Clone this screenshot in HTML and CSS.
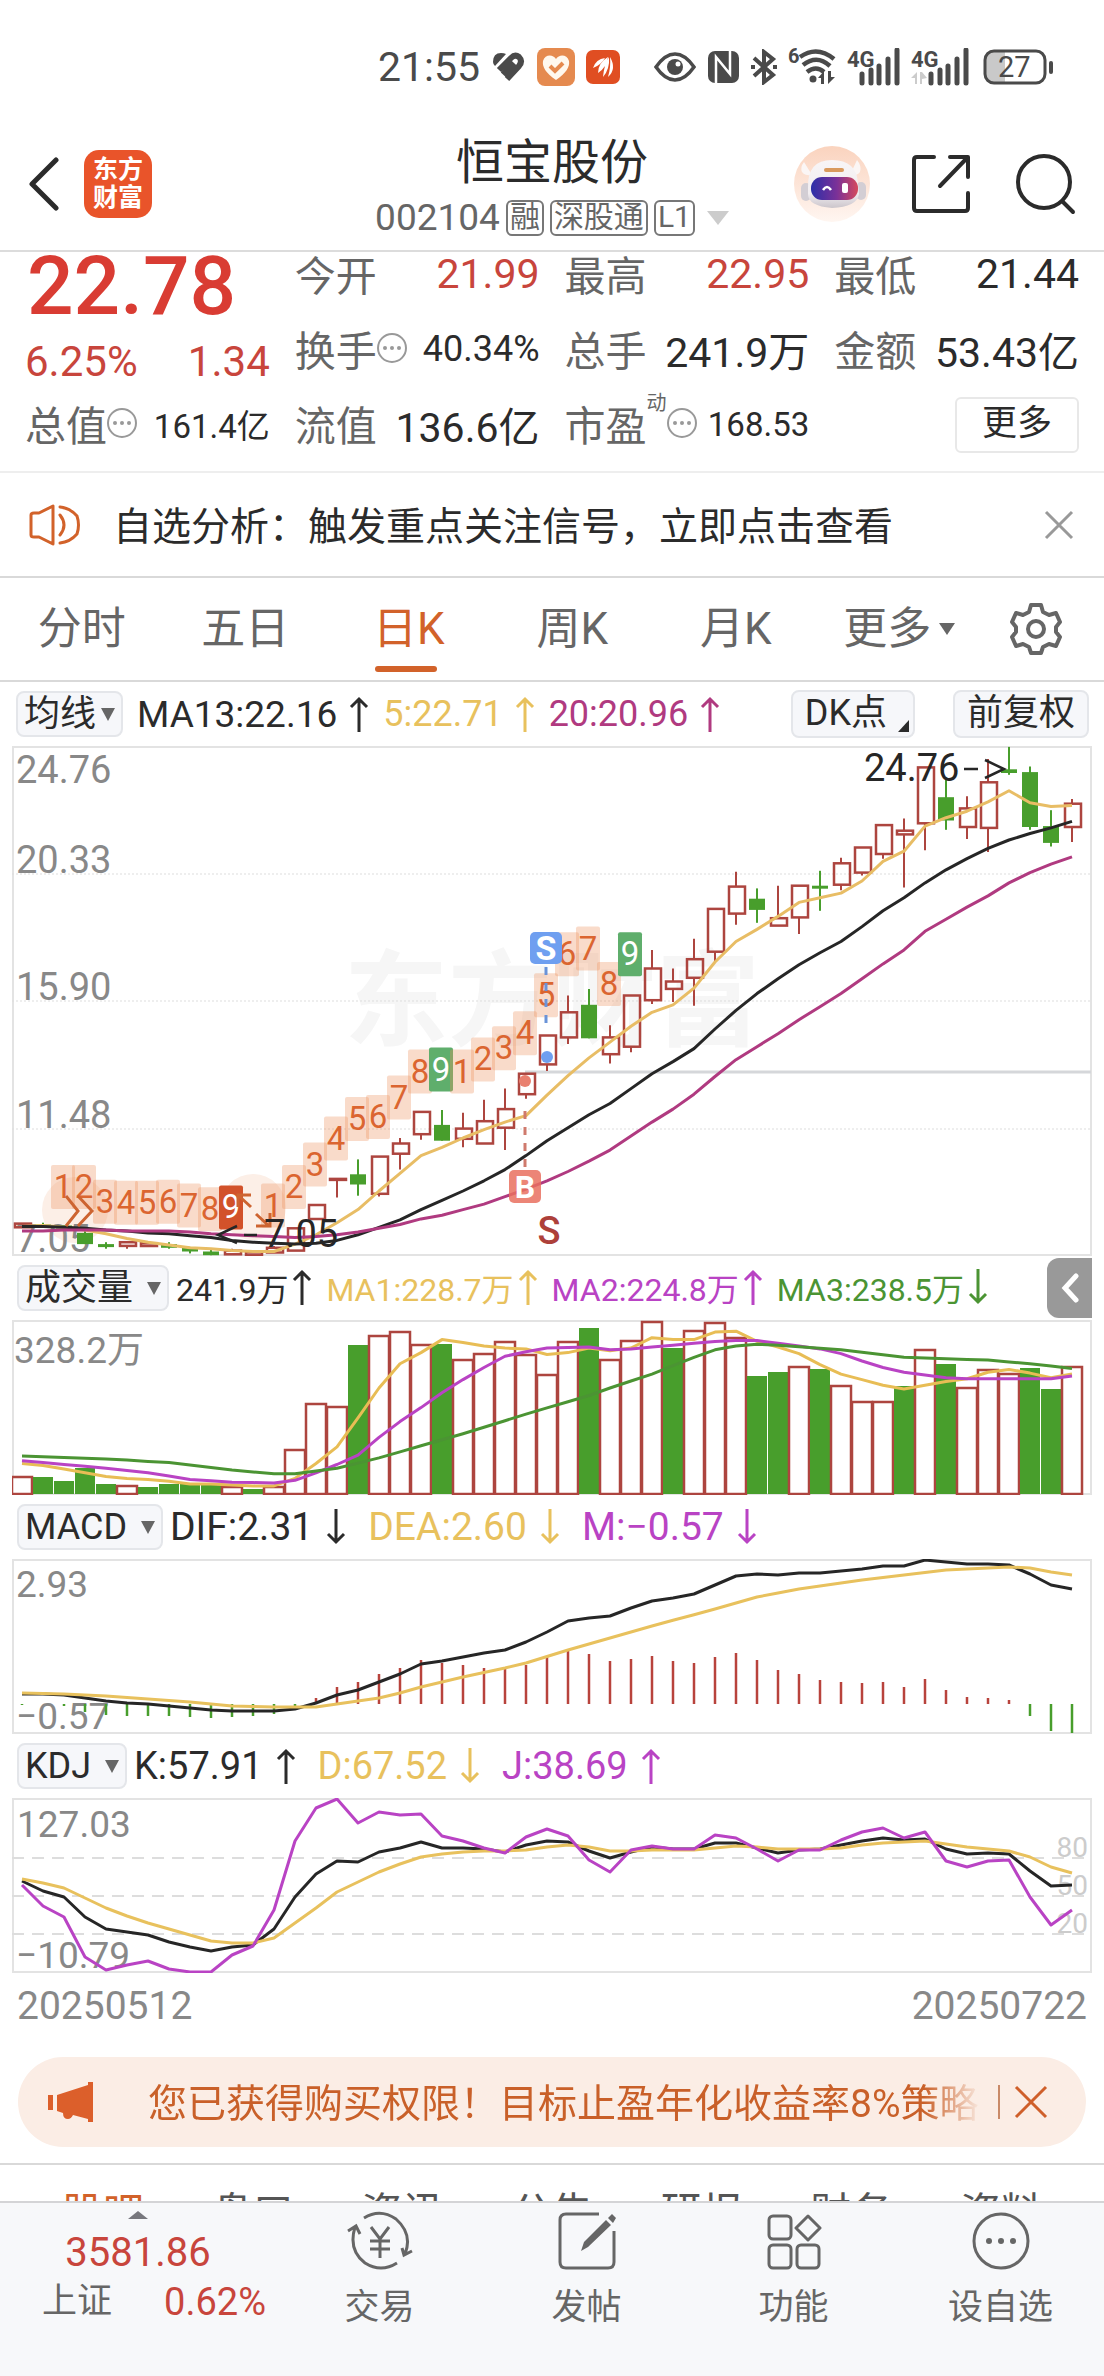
FILE: index.html
```html
<!DOCTYPE html>
<html lang="zh-CN">
<head>
<meta charset="utf-8">
<meta name="viewport" content="width=device-width, initial-scale=1">
<title>恒宝股份 002104</title>
<link rel="stylesheet" href="styles.css">
</head>
<body>
<div class="statusbar">
  <span class="clock">21:55</span>
  <svg width="34" height="30" viewBox="0 0 34 30" fill="none" stroke="#4a4a4a" stroke-width="6"><path d="M1 10Q1 1 9 1q3 0 5 1L3 14Q1 12 1 10z" fill="#4a4a4a" stroke="none"/><path d="M7 18 19 6Q23 2 27 5q4 4 0 9L15 27M11 22.500 22 11"/></svg>
  <svg class="gap-s" width="38" height="38" viewBox="0 0 38 38"><rect width="38" height="38" rx="8" fill="#e58a4f"/><path d="M19 32C9 25 5 19 6 13c2-7 10-7 13-2 3-5 11-5 13 2 1 6-3 12-13 19z" fill="#fff8ee"/><path d="m13 18 5 5 8-8" fill="none" stroke="#e58a4f" stroke-width="4"/></svg>
  <svg class="gap-s" width="34" height="34" viewBox="0 0 34 34"><rect width="34" height="34" rx="7" fill="#e04e22"/><path d="M7 18Q10 9 19 8q-4 7-12 10zM12 23Q12 13 22 7q-1 10-10 16zM17 27Q18 15 23 7q1 12-6 20zM22 27Q25 17 24 7q7 12-2 20z" fill="#fff"/></svg>
  <svg class="gap-l" width="42" height="30" viewBox="0 0 42 30"><path d="M2 15Q11 2 21 2t19 13Q31 28 21 28T2 15z" fill="none" stroke="#4a4a4a" stroke-width="3.500"/><circle cx="21" cy="15" r="8" fill="#4a4a4a"/><circle cx="24" cy="12" r="2.500" fill="#fff"/></svg>
  <svg class="gap-s" width="33" height="34" viewBox="0 0 33 34"><rect x="1" y="1" width="31" height="32" rx="7" fill="#4a4a4a"/><path d="M9 33V7l14 17V1" fill="none" stroke="#fff" stroke-width="2.500"/><path d="M9 7v26" stroke="#fff" stroke-width="2"/></svg>
  <svg class="gap-s" width="26" height="36" viewBox="0 0 26 36" fill="none" stroke="#4a4a4a" stroke-width="4"><path d="M3 9l19 17-9 7V3l9 7L3 27"/><path d="M0 18h4M22 18h4"/></svg>
  <svg class="gap-s" width="48" height="38" viewBox="0 0 48 38"><text x="0" y="15" class="tiny">6</text><g fill="none" stroke="#4a4a4a" stroke-width="4.500"><path d="M12 9Q29-3 46 11M15 17q14-11 27 1M19 24q9-7 17 0"/></g><circle cx="25" cy="31" r="3.500" fill="#4a4a4a"/><path d="M36 23v13h-3v-6h-3zM40 36V23h3v6h4z" fill="#4a4a4a"/></svg>
  <svg class="gap-s" width="53" height="38" viewBox="0 0 53 38"><text x="0" y="19" class="net">4G</text><path d="M15 26v9M24 22v13M32 18v17M41 11v24M50 2v33" stroke="#4a4a4a" stroke-width="5" stroke-linecap="round"/></svg>
  <svg class="gap-s" width="58" height="38" viewBox="0 0 58 38"><text x="0" y="19" class="net">4G</text><path d="M6 24v12H4v-6H0zM9 36V24h2l5 6-5 1v5z" fill="#ccc"/><path d="M20 26v9M29 22v13M37 18v17M46 11v24M55 2v33" stroke="#4a4a4a" stroke-width="5" stroke-linecap="round"/></svg>
  <svg class="gap-m" width="71" height="36" viewBox="0 0 71 36"><rect x="2" y="2" width="60" height="32" rx="9" fill="#fff"/><path d="M22 2v32H11q-9 0-9-9V11q0-9 9-9z" fill="#c9c9c9"/><rect x="2" y="2" width="60" height="32" rx="9" fill="none" stroke="#4a4a4a" stroke-width="3"/><rect x="66" y="12" width="4" height="13" rx="2" fill="#4a4a4a"/><text x="15" y="28" class="batt">27</text></svg>
</div>

<header class="topbar">
  <div class="top-left">
    <button class="icon-btn" aria-label="返回"><svg width="32" height="54" viewBox="0 0 32 54" fill="none" stroke="#2b2b2b" stroke-width="5" stroke-linecap="round" stroke-linejoin="round"><path d="M28 3 4 27l24 24"/></svg></button>
    <a class="logo" href="#">东方<br>财富</a>
  </div>
  <div class="title">
    <h1>恒宝股份</h1>
    <p class="code">002104<span class="tag">融</span><span class="tag">深股通</span><span class="tag">L1</span><i class="tri"></i></p>
  </div>
  <div class="top-right">
    <button class="icon-btn" aria-label="智能助手"><svg width="76" height="76" viewBox="0 0 76 76"><defs><linearGradient id="bg" x2="0" y2="1"><stop stop-color="#fad3be"/><stop offset="1" stop-color="#fff6f1"/></linearGradient><linearGradient id="visor"><stop stop-color="#2c2fa8"/><stop offset=".55" stop-color="#7b3198"/><stop offset="1" stop-color="#d64a5c"/></linearGradient><linearGradient id="shell" x2="0" y2="1"><stop stop-color="#f8f5f6"/><stop offset=".7" stop-color="#f1edf0"/><stop offset="1" stop-color="#cbc5cb"/></linearGradient></defs><circle cx="38" cy="38" r="38" fill="url(#bg)"/><path d="M10 16q-4 5-2 10 3 4 10 3zM63 14q5 6 3 12-3 4-10 3z" fill="#fbf6f5"/><rect x="7" y="37" width="10" height="18" rx="5" fill="#d3ced4"/><rect x="62" y="36" width="10" height="18" rx="5" fill="#d3ced4"/><path d="M14 42Q13 14 38 14t26 24l1 10q-2 13-27 14Q14 60 14 48z" fill="url(#shell)"/><rect x="30" y="22" width="20" height="4" rx="2" fill="#d99a5e"/><rect x="17" y="31" width="47" height="23" rx="11" fill="url(#visor)"/><path d="M29 44q4-6 8 0" fill="none" stroke="#fff" stroke-width="2.500"/><rect x="48" y="37" width="6" height="10" rx="2" fill="#fff"/></svg></button>
    <button class="icon-btn share" aria-label="分享"><svg width="58" height="58" viewBox="0 0 58 58" fill="none" stroke="#2b2b2b" stroke-width="4" stroke-linecap="round" stroke-linejoin="round"><path d="M22 2H5Q2 2 2 5v48q0 3 3 3h48q3 0 3-3V38M38 2h18v20M55 3 28 31"/></svg></button>
    <button class="icon-btn search" aria-label="搜索"><svg width="60" height="62" viewBox="0 0 60 62" fill="none" stroke="#2b2b2b" stroke-width="4" stroke-linecap="round"><circle cx="28" cy="29" r="26"/><path d="m47 49 10 10"/></svg></button>
  </div>
</header>

<section class="quote">
  <div class="price">
    <strong>22.78</strong>
    <p><span>6.25%</span><span>1.34</span></p>
  </div>
  <div class="stat"><span>今开</span><b class="up">21.99</b></div>
  <div class="stat"><span>最高</span><b class="up">22.95</b></div>
  <div class="stat"><span>最低</span><b>21.44</b></div>
  <div class="stat"><span>换手<i class="dots"><i></i><i></i><i></i></i></span><b class="mid">40.34%</b></div>
  <div class="stat"><span>总手</span><b>241.9万</b></div>
  <div class="stat"><span>金额</span><b>53.43亿</b></div>
  <div class="stat"><span>总值<i class="dots"><i></i><i></i><i></i></i></span><b class="small">161.4亿</b></div>
  <div class="stat"><span>流值</span><b>136.6亿</b></div>
  <div class="stat"><span>市盈<sup>动</sup><i class="dots"><i></i><i></i><i></i></i></span><b class="small">168.53</b></div>
  <button class="more">更多</button>
</section>

<div class="notice">
  <svg width="52" height="42" viewBox="0 0 52 42" fill="none" stroke="#d2622a" stroke-width="3" stroke-linecap="round" stroke-linejoin="round"><path d="M2 11q0-2 3-2h5L24 2v38L10 33H5q-3 0-3-2zM31 11q8 10 0 20M31 3q10 1 17 9 3 9 0 18-7 8-17 9"/></svg>
  <a href="#">自选分析：触发重点关注信号，立即点击查看</a>
  <button class="icon-btn" aria-label="关闭"><svg width="30" height="30" viewBox="0 0 30 30" stroke="#999" stroke-width="3"><path d="M2 2l26 26M28 2 2 28"/></svg></button>
</div>

<nav class="periods">
  <button>分时</button><button>五日</button><button class="on">日K</button><button>周K</button><button>月K</button><button>更多<i class="tri"></i></button>
  <button class="gear" aria-label="设置"><svg width="52" height="52" viewBox="0 0 52 52" fill="none" stroke="#666" stroke-width="4" stroke-linejoin="round"><path d="M21 2h10l2 7 6 3 7-2 4 9-4 5v5l4 5-4 9-7-2-6 3-2 6H21l-2-6-6-3-7 2-4-9 4-5v-5l-4-5 4-9 7 2 6-3z"/><circle cx="26" cy="26" r="8"/></svg></button>
</nav>

<svg class="defs" width="0" height="0" aria-hidden="true"><symbol id="up" viewBox="0 0 20 36"><path d="M10 36V3M2 11l8-8 8 8" fill="none" stroke="currentColor" stroke-width="3"/></symbol><symbol id="down" viewBox="0 0 20 36"><path d="M10 0v33M2 25l8 8 8-8" fill="none" stroke="currentColor" stroke-width="3"/></symbol></svg>

<main class="charts">
  <div class="legend price-legend">
    <label class="pick tight"><select aria-label="主图指标"><option>均线</option></select></label>
    <span class="val">MA13:22.16<svg class="arrow"><use href="#up"/></svg></span>
    <span class="val yellow">5:22.71<svg class="arrow"><use href="#up"/></svg></span>
    <span class="val magenta">20:20.96<svg class="arrow"><use href="#up"/></svg></span>
    <button class="chip dk">DK点</button>
    <button class="chip">前复权</button>
  </div>
  <svg class="chart" id="kline" viewBox="0 0 1080 510" role="img" aria-label="日K线"></svg>

  <div class="legend vol-legend">
    <label class="pick"><select aria-label="副图一"><option>成交量</option></select></label>
    <span class="val">241.9万<svg class="arrow"><use href="#up"/></svg></span>
    <span class="val yellow">MA1:228.7万<svg class="arrow"><use href="#up"/></svg></span>
    <span class="val purple">MA2:224.8万<svg class="arrow"><use href="#up"/></svg></span>
    <span class="val green">MA3:238.5万<svg class="arrow"><use href="#down"/></svg></span>
    <button class="drawer" aria-label="展开"><svg width="18" height="30" viewBox="0 0 18 30" fill="none" stroke="#fff" stroke-width="5" stroke-linecap="round"><path d="M15 3 4 15l11 12"/></svg></button>
  </div>
  <svg class="chart" id="volume" viewBox="0 0 1080 175" role="img" aria-label="成交量"></svg>

  <div class="legend macd-legend">
    <label class="pick"><select aria-label="副图二"><option>MACD</option></select></label>
    <span class="val">DIF:2.31<svg class="arrow"><use href="#down"/></svg></span>
    <span class="val yellow">DEA:2.60<svg class="arrow"><use href="#down"/></svg></span>
    <span class="val purple">M:−0.57<svg class="arrow"><use href="#down"/></svg></span>
  </div>
  <svg class="chart" id="macd" viewBox="0 0 1080 175" role="img" aria-label="MACD"></svg>

  <div class="legend kdj-legend">
    <label class="pick"><select aria-label="副图三"><option>KDJ</option></select></label>
    <span class="val">K:57.91<svg class="arrow"><use href="#up"/></svg></span>
    <span class="val yellow">D:67.52<svg class="arrow"><use href="#down"/></svg></span>
    <span class="val purple">J:38.69<svg class="arrow"><use href="#up"/></svg></span>
  </div>
  <svg class="chart" id="kdj" viewBox="0 0 1080 175" role="img" aria-label="KDJ"></svg>
  <div class="dates"><time>20250512</time><time>20250722</time></div>
</main>

<aside class="banner">
  <svg width="48" height="40" viewBox="0 0 48 40" fill="#dc5f2b"><path d="M0 13h5v15H0zM9 13 40 3V0h5v40h-5v-3l-15-4q-2 4-5 4-5 0-5-6l-6-2z"/></svg>
  <a href="#">您已获得购买权限！目标止盈年化收益率8%策略</a>
  <button class="icon-btn" aria-label="关闭公告"><svg width="34" height="34" viewBox="0 0 34 34" stroke="#cf5f2a" stroke-width="3"><path d="M2 2l30 30M32 2 2 32"/></svg></button>
</aside>

<nav class="sections">
  <a class="on" href="#">股吧</a><a href="#">盘口</a><a href="#">资讯</a><a href="#">公告</a><a href="#">研报</a><a href="#">财务</a><a href="#">资料</a>
</nav>

<footer class="toolbar">
  <a class="index" href="#"><i class="tri"></i><b>3581.86</b><span>上证<em>0.62%</em></span></a>
  <button><svg width="66" height="60" viewBox="0 0 66 60" fill="none" stroke="#666" stroke-width="3"><path d="M17 7Q33-3 49 8q17 15 9 35M50 52Q34 62 18 52 1 39 8 16M1 20l8-5 4 8M65 40l-8 4-2-7"/><path d="m24 16 9 12 9-12M33 28v19M23 30h20M23 38h20"/></svg>交易</button>
  <button><svg width="60" height="60" viewBox="0 0 60 60" fill="none" stroke="#666" stroke-width="3"><path d="M42 3H9Q3 3 3 9v42q0 6 6 6h42q6 0 6-6V20"/><path d="M24 40l3-9L49 9l5 5-23 22zM51 7l4-4 4 4-3 5z" fill="#666" stroke="none"/></svg>发帖</button>
  <button><svg width="56" height="60" viewBox="0 0 56 60" fill="none" stroke="#666" stroke-width="3"><rect x="3" y="5" width="22" height="23" rx="4"/><rect x="3" y="34" width="22" height="23" rx="4"/><rect x="31" y="34" width="22" height="23" rx="4"/><path d="M42 5l12 12-12 12-12-12z" stroke-linejoin="round"/></svg>功能</button>
  <button><svg width="60" height="60" viewBox="0 0 60 60" fill="none" stroke="#666" stroke-width="3"><circle cx="30" cy="30" r="27"/><g fill="#666" stroke="none"><circle cx="18" cy="30" r="3"/><circle cx="30" cy="30" r="3"/><circle cx="42" cy="30" r="3"/></g></svg>设自选</button>
</footer>
<script src="charts.js"></script>
</body>
</html>
```
FILE: styles.css
```css
* { box-sizing: border-box; }
body { margin: 0; background: #fff; color: #2b2b2b; font-family: Roboto, "Noto Sans CJK SC", sans-serif; font-size: 36px; }
button { border: 0; padding: 0; background: none; color: inherit; font: inherit; }
a { color: inherit; text-decoration: none; }
h1, p { margin: 0; font-weight: 400; }
b, strong, em, i { font-weight: 400; font-style: normal; }
svg { flex: none; }
.defs { position: absolute; }
.tri { display: inline-block; border: 8px solid transparent; border-top: 12px solid #666; border-bottom: 0; }

.statusbar { display: flex; align-items: center; justify-content: flex-end; height: 105px; padding: 28px 50px 0 0; }
.clock { margin-right: 12px; color: #4a4a4a; font-size: 41px; }
.gap-s { margin-left: 11px; }
.gap-m { margin-left: 14px; }
.gap-l { margin-left: 34px; }
.tiny { font-size: 20px; font-weight: 700; fill: #4a4a4a; }
.net { font-size: 22px; font-weight: 700; fill: #4a4a4a; }
.batt { font-size: 29px; fill: #4a4a4a; }

.topbar { display: grid; grid-template-columns: 1fr auto 1fr; align-items: center; height: 147px; padding: 0 28px; border-bottom: 2px solid #dcdcdc; }
.icon-btn { display: flex; align-items: center; }
.top-left { display: flex; align-items: center; gap: 24px; padding-top: 12px; }
.logo { display: grid; place-content: center; width: 68px; height: 68px; border-radius: 15px; background: #e9542a; color: #fff; font-size: 25px; font-weight: 700; line-height: 28px; }
.title { padding-top: 20px; text-align: center; }
.title h1 { font-size: 48px; line-height: 60px; }
.code { display: flex; align-items: center; justify-content: center; gap: 6px; height: 50px; color: #666; font-size: 37px; }
.tag { height: 36px; padding: 0 2px; border: 2px solid #777; border-radius: 6px; font-size: 30px; line-height: 30px; }
.code .tri { margin-left: 6px; border-width: 14px 11px 0; border-top-color: #ccc; }
.top-right { display: flex; align-items: center; justify-content: flex-end; padding-top: 12px; }
.share { margin-left: 42px; }
.search { margin-left: 46px; }

.quote { display: grid; grid-template-columns: repeat(4, 1fr); grid-auto-rows: 46px; gap: 29px 25px; padding: 0 25px 23px; border-bottom: 2px solid #eee; }
.price { grid-row: span 2; color: #d93c33; }
.price strong { display: block; padding-left: 2px; font-size: 82px; font-weight: 500; line-height: 68px; }
.price p { display: flex; justify-content: space-between; margin-top: 22px; font-size: 42px; line-height: 40px; color: #c8453c; }
.stat { display: flex; align-items: center; justify-content: space-between; white-space: nowrap; }
.stat span { display: flex; align-items: center; padding-bottom: 4px; color: #666; font-size: 41px; }
.stat b { padding-bottom: 2px; font-size: 41px; }
.stat .mid { font-size: 36px; }
.stat .small { font-size: 33px; }
.stat .up { color: #c8453c; }
.stat sup { align-self: flex-start; font-size: 20px; line-height: 20px; }
.dots { display: flex; align-items: center; justify-content: center; gap: 3px; width: 30px; height: 30px; border: 2px solid #999; border-radius: 15px; }
.dots i { width: 4px; height: 4px; border-radius: 2px; background: #999; }
.more { justify-self: end; align-self: center; width: 124px; height: 56px; padding-bottom: 2px; border: 2px solid #e8e8e8; border-radius: 6px; font-size: 35px; line-height: 48px; }

.notice { display: flex; align-items: center; height: 105px; padding: 0 30px 0 29px; border-bottom: 2px solid #d9d9d9; }
.notice a { flex: 1; padding: 0 0 4px 32px; font-size: 39px; }

.periods { display: grid; grid-template-columns: repeat(6, 3fr) 2fr; align-items: center; justify-items: center; height: 104px; padding-right: 14px; border-bottom: 2px solid #d9d9d9; color: #666; font-size: 44px; }
.periods button { display: flex; align-items: center; height: 102px; line-height: 96px; }
.periods .on { position: relative; color: #d2622a; }
.periods .on::after { content: ""; position: absolute; left: 2px; right: 8px; bottom: 8px; height: 6px; border-radius: 3px; background: #d2622a; }
.periods .tri { margin-left: 8px; }

.charts { padding: 0 12px; }
.legend { display: flex; align-items: center; height: 64px; padding-left: 5px; white-space: nowrap; }
.pick { display: flex; align-items: center; height: 46px; padding: 0 6px; border: 2px solid #e4e6ea; border-radius: 8px; background: #f6f7fa; }
.pick::after { content: ""; margin-left: 13px; border: 7px solid transparent; border-top: 13px solid #666; border-bottom: 0; }
.pick select { appearance: none; border: 0; padding: 0; background: none; color: inherit; font: inherit; font-size: 36px; line-height: 42px; }
.tight::after { margin-left: 4px; }
.val { display: flex; align-items: center; margin-left: 7px; }
.arrow { width: 20px; height: 36px; margin-left: 8px; }
.yellow { color: #e8c15d; }
.magenta { color: #b03a80; }
.purple { color: #b943c4; }
.green { color: #4b9433; }
.price-legend { padding: 0 3px 0 4px; }
.price-legend .val { margin-left: 14px; font-size: 37px; }
.price-legend .yellow, .price-legend .magenta { font-size: 36px; }
.price-legend .arrow { margin-left: 12px; }
.chip { position: relative; height: 48px; padding: 0 12px 2px; border: 2px solid #e4e6ea; border-radius: 8px; background: #f6f7fa; font-size: 36px; line-height: 42px; }
.dk { margin: 0 38px 0 auto; padding-right: 26px; }
.dk::after { content: ""; position: absolute; right: 4px; bottom: 4px; border: solid transparent; border-width: 12px 0 0 11px; border-bottom: 12px solid #2b2b2b; border-top: 0; }
.vol-legend .val { padding-bottom: 2px; font-size: 32px; }
.vol-legend .arrow { margin-left: 4px; }
.vol-legend .val + .val { margin-left: 14px; }
.macd-legend .val { font-size: 39px; }
.kdj-legend .val { font-size: 38px; }
.macd-legend .val + .val, .kdj-legend .val + .val { margin-left: 22px; }
.macd-legend .arrow, .kdj-legend .arrow { margin-left: 13px; }
.drawer { display: grid; place-content: center; width: 45px; height: 60px; margin-left: auto; border-radius: 12px 0 0 12px; background: #999; }
.chart { display: block; width: 100%; height: auto; font-size: 38px; }
.dates { display: flex; justify-content: space-between; height: 66px; padding: 0 5px; color: #888; font-size: 39px; line-height: 66px; }

.banner { display: flex; align-items: center; height: 90px; margin: 18px 18px 16px; padding: 0 38px 0 30px; border-radius: 45px; background: #fbede5; }
.banner a { flex: 1; overflow: hidden; margin: 0 16px 0 52px; padding-bottom: 4px; color: #c96029; font-size: 39px; white-space: nowrap; -webkit-mask-image: linear-gradient(90deg, #000 93%, transparent); mask-image: linear-gradient(90deg, #000 93%, transparent); }
.banner button { padding-left: 14px; border-left: 2px solid #c98a68; }

.sections { display: flex; justify-content: space-between; overflow: hidden; height: 38px; padding: 24px 62px 0; border-top: 2px solid #d9d9d9; color: #555; font-size: 41px; line-height: 48px; }
.sections .on { color: #d2622a; }

.toolbar { display: grid; grid-template-columns: 4fr 3fr 3fr 3fr 3fr; min-height: 176px; border-top: 2px solid #d4d4d6; background: #f7f8fa; color: #666; font-size: 35px; line-height: 46px; }
.toolbar button { display: flex; flex-direction: column; align-items: center; gap: 14px; padding-top: 8px; }
.index { display: flex; flex-direction: column; align-items: center; }
.index .tri { margin: 8px 0 12px; border-width: 0 10px 8px; border-bottom: 8px solid #77777d; }
.index b { color: #c8453c; font-size: 40px; line-height: 44px; }
.index span { display: flex; align-self: stretch; justify-content: space-between; margin-top: 4px; padding: 0 10px 0 42px; }
.index em { color: #c8453c; font-size: 38px; }
```
FILE: charts.js
```js
const STEP = 21, LEFT = 10, RED = '#ad453f', GREEN = '#489e2c';
const X = i => LEFT + STEP * i;
const f = n => Math.round(n * 10) / 10;

const line = (ys, color, k = 1) =>
  `<polyline points="${ys.map((y, i) => X(i) + ',' + f(y * k)).join(' ')}" fill="none" stroke="${color}" stroke-width="3" stroke-linejoin="round"/>`;
const rect = (x, y, w, h, attrs) => `<rect x="${f(x)}" y="${f(y)}" width="${f(w)}" height="${f(h)}" ${attrs}/>`;
const text = (x, y, s, attrs = 'fill="#888"') => `<text x="${x}" y="${y}" ${attrs}>${s}</text>`;
const frame = h => rect(1, 1, 1078, h - 2, 'fill="none" stroke="#e3e3e3" stroke-width="2"');

// Fill the gaps of a sparse series ([index, value] pairs) by straight interpolation.
function dense(pairs) {
  const out = [];
  for (let p = 0; p < pairs.length - 1; p++) {
    const [a, va] = pairs[p], [b, vb] = pairs[p + 1];
    for (let i = a; i < b; i++) out.push(va + (vb - va) * (i - a) / (b - a));
  }
  out.push(pairs[pairs.length - 1][1]);
  return out;
}

// Daily candles: direction, body top, body bottom, high, low (plot units from the top).
const K = 0.931;
const candles = [
  'r 513 517 513 517', 'g 514 517 512 517', 'g 515 518 515 519', 'g 523 535 520 535', 'g 535 537 533 540', 'r 533 537 533 540',
  'r 534 537 533 538', 'g 535 539 533 540', 'g 539 543 538 545', 'g 543 547 540 547', 'r 542 546 540 546', 'r 544 547 543 547',
  'r 539 544 537 544', 'r 518 542 518 542', 'r 493 508 493 508', 'r 465 466 465 485', 'g 460 471 444 483', 'r 441 481 441 484',
  'r 427 438 421 455', 'r 393 417 393 423', 'g 407 424 391 424', 'r 411 422 394 431', 'r 403 427 380 427', 'r 390 410 368 434',
  'r 352 374 352 379', 'r 311 342 311 349', 'r 286 313 268 320', 'g 278 314 261 314', 'r 313 331 300 341', 'r 268 323 268 329',
  'r 239 273 219 277', 'r 253 261 239 275', 'r 229 249 207 279', 'r 175 221 175 233', 'r 151 180 135 192', 'g 164 176 153 190',
  'r 185 193 150 193', 'r 150 184 150 202', 'g 150 153 134 177', 'r 126 149 120 155', 'r 109 136 109 139', 'r 85 116 85 121',
  'r 91 95 78 152', 'r 23 83 23 112', 'g 55 80 36 90', 'r 67 87 54 100', 'r 39 88 14 114', 'g 25 29 1 31',
  'g 28 87 22 90', 'g 86 104 69 108', 'r 62 87 57 103'
];
const ma5 = [516,515,517,520,524,529,533,536,539,540,542,543,543,535,525,512,498,478,459,440,431,421,412,404,397,375,354,335,318,301,286,278,260,232,210,197,183,168,163,158,145,124,113,86,77,70,60,48,61,65,64];
const ma13 = [516,516,517,518,520,521,523,524,526,528,531,533,534,535,534,531,525,517,509,498,488,478,467,455,440,424,410,396,384,368,352,339,325,304,284,266,250,235,222,210,194,177,163,147,133,121,110,101,94,88,81];
const ma20 = [521,521,520,520,520,521,521,521,522,524,525,526,527,528,527,525,522,518,514,508,504,498,492,484,476,467,457,446,434,419,404,390,374,355,337,323,309,294,280,266,250,234,219,199,186,173,161,147,136,127,119];

// Sequence counters: candle index, top edge, digit.
const counts = [[2,450,1],[3,450,2],[4,466,3],[5,467,4],[6,467,5],[7,466,6],[8,470,7],[9,474,8],[10,472,9],[12,470,1],[13,450,2],[14,426,3],[15,398,4],[16,377,5],[17,375,6],[18,354,7],[19,326,8],[20,324,9],[21,326,1],[22,313,2],[23,301,3],[24,285,4],[25,244,5],[26,200,6],[27,194,7],[28,232,8],[29,200,9]];

function drawKline() {
  let s = text(540, 292, '东方财富', 'fill="#f6f6f6" font-size="104" font-weight="700" text-anchor="middle"') + frame(510);
  for (const y of [128, 255, 383]) s += `<path d="M0 ${y}H1080" stroke="#ddd" stroke-dasharray="2 2"/>`;
  s += '<circle cx="63" cy="464" r="33" fill="#fcefe7"/><circle cx="241" cy="461" r="33" fill="#fcefe7"/>';
  s += '<path d="M513 326H1079" stroke="#d5d7da" stroke-width="3"/>';
  s += text(4, 37, '24.76') + text(4, 127, '20.33') + text(4, 254, '15.90') + text(4, 382, '11.48') + text(4, 506, '7.05');
  for (const [i, top, n] of counts) {
    const y = top * K, solid = i === 10 ? '#d2522a' : n === 9 ? '#5fae6c' : '';
    s += rect(X(i) - 13, y, 24, 44, `rx="2" fill="${solid || '#ee935f'}" fill-opacity="${solid ? 1 : 0.33}"`);
    s += text(X(i) - 1, f(y + 33), n, `fill="${solid ? '#fff' : '#db6530'}" font-size="33" text-anchor="middle"`);
  }
  candles.forEach((c, i) => {
    const p = c.split(' '), [top, bot, hi, lo] = p.slice(1).map(v => v * K), x = X(i);
    if (p[0] === 'g') {
      s += rect(x - 1, hi, 2, lo - hi, `fill="${GREEN}"`) + rect(x - 8, top, 16, Math.max(3, bot - top), `fill="${GREEN}"`);
    } else {
      s += `<path d="M${x} ${f(hi)}V${f(top)}M${x} ${f(bot)}V${f(lo)}" stroke="${RED}" stroke-width="2"/>`;
      s += rect(x - 7, top, 16, Math.max(1, bot - top), `fill="none" stroke="${RED}" stroke-width="2.5"`);
    }
  });
  s += line(ma5, '#e8bd65', K) + line(ma13, '#262626', K) + line(ma20, '#b03a80', K);
  s += '<path d="M534 221V277" stroke="#6a93d8" stroke-width="3" stroke-dasharray="8 8"/><path d="M513 365V421" stroke="#cf7a6d" stroke-width="3" stroke-dasharray="8 8"/>';
  s += '<circle cx="535" cy="311" r="6" fill="#6f9ff0"/><circle cx="513" cy="335" r="6" fill="#e9806f"/>';
  s += rect(518, 186, 32, 32, 'rx="5" fill="#6f9ff0"') + text(534, 214, 'S', 'fill="#fff" font-size="34" font-weight="700" text-anchor="middle"');
  s += rect(497, 424, 32, 33, 'rx="5" fill="#e9705f" fill-opacity=".85"') + text(513, 452, 'B', 'fill="#fff" font-size="32" font-weight="700" text-anchor="middle"');
  s += text(537, 498, 'S', 'fill="#ad403a" font-size="38" font-weight="500" text-anchor="middle"');
  s += '<path d="M54 450 66 465 54 480M66 450 80 465 66 480M226 461V449H239M227 450 239 461M244 468 257 480M244 480H258V467" fill="none" stroke="#cd6431" stroke-width="3"/>';
  s += text(852, 35, '24.76', 'fill="#262626"') + '<path d="M952 23H966M973 14 992 23 973 32M225 480 206 489 225 497M232 489H245" fill="none" stroke="#262626" stroke-width="2.500"/>';
  s += text(252, 501, '7.05', 'fill="#262626"');
  document.getElementById('kline').innerHTML = s;
}

const volumes = 'r156 g157 g161 g148 g164 r165 g167 g164 g164 g165 r166 g169 r166 r129 r83 r86 g25 r15 r11 r24 g24 r39 r33 r21 r34 r54 r21 g8 r39 r20 r1 g28 r10 r2 r17 g56 g52 r46 g49 r65 r81 r81 g66 r29 g44 r67 r49 r53 g48 g69 r46'.split(' ');
const v1 = [154,156,160,164,168,170,171,173,176,176,177,178,178,170,154,136,105,73,47,35,21,24,28,30,31,37,35,30,33,30,19,21,21,13,12,23,29,36,48,58,64,70,74,70,66,63,56,53,57,62,58];
const v2 = dense([[0,151],[2,155],[4,159],[6,164],[8,171],[10,174],[12,175],[13,172],[14,164],[15,155],[16,145],[17,126],[18,109],[19,94],[20,78],[21,64],[22,51],[23,39],[24,34],[25,30],[27,29],[28,32],[29,31],[33,23],[34,22],[35,22],[36,25],[38,31],[39,36],[40,44],[41,51],[42,56],[44,62],[45,63],[49,63],[50,60]]);
const v3 = dense([[0,146],[4,149],[7,153],[10,161],[12,165],[13,165],[15,159],[17,148],[21,122],[24,101],[27,81],[28,73],[30,58],[32,40],[33,32],[34,28],[35,26],[36,27],[39,32],[42,40],[46,43],[48,47],[50,52]]);

function drawVolume() {
  let s = frame(175);
  volumes.forEach((v, i) => {
    const y = +v.slice(1);
    s += v[0] === 'g' ? rect(X(i) - 10, y, 20, 174 - y, `fill="${GREEN}"`)
      : rect(X(i) - 10, y + 1, 20, 173 - y, `fill="#fff" stroke="${RED}" stroke-width="2.5"`);
  });
  s += line(v1, '#e8bd55', 0.932) + line(v2, '#b943c4', 0.932) + line(v3, '#4b9433', 0.932) + text(2, 43, '328.2万', 'fill="#888" font-size="37"');
  document.getElementById('volume').innerHTML = s;
}

const dif = [135,135,136,139,142,144,145,147,149,151,152,152,152,150,144,136,131,123,115,105,102,98,94,91,83,73,62,59,57,49,42,39,35,26,17,15,16,14,14,12,10,7,7,1,3,5,5,6,15,26,30];
const dea = dense([[0,134],[2,135],[4,137],[6,140],[8,143],[10,147],[12,148],[14,148],[15,145],[17,139],[18,134],[19,128],[21,118],[23,109],[24,104],[26,91],[30,67],[33,50],[35,38],[37,30],[40,21],[44,11],[47,8],[48,9],[49,13],[50,16]]);
const hist = [146,145,147,153,156,157,157,157,158,159,158,157,155,148,139,128,123,115,109,101,104,106,109,110,106,97,90,95,102,100,97,102,104,98,94,101,111,115,121,123,124,123,128,120,131,138,139,141,157,172,174];

function drawMacd() {
  let s = frame(175) + text(4, 38, '2.93', 'fill="#888" font-size="37"') + text(4, 170, '−0.57', 'fill="#888" font-size="37"');
  hist.forEach((h, i) => { s += `<path d="M${X(i)} 145V${h}" stroke="${h > 145 ? GREEN : '#b8433c'}" stroke-width="2.5"/>`; });
  s += line(dif, '#262626') + line(dea, '#e8c15d');
  document.getElementById('macd').innerHTML = s;
}

const kk = [83,93,99,119,131,134,137,144,149,153,149,147,131,99,76,63,64,54,50,44,50,50,51,54,47,43,44,53,60,54,49,51,51,45,45,50,55,52,51,47,43,40,42,41,51,56,55,56,73,88,87];
const dd = [81,85,90,100,110,118,125,131,137,143,145,145,140,125,110,94,84,74,66,59,56,54,53,53,52,49,47,49,53,53,52,52,52,50,48,49,51,51,51,50,47,45,44,43,46,49,51,53,59,69,75];
const jj = [87,108,119,159,172,167,163,171,174,174,157,148,112,43,10,1,25,14,17,16,38,43,50,55,39,31,38,62,74,52,48,51,51,37,40,51,63,52,52,42,34,30,40,34,63,69,63,62,99,127,112];

function drawKdj() {
  let s = frame(175);
  for (const [y, n] of [[60, 80], [98, 50], [136, 20]]) {
    s += `<path d="M0 ${y}H1080" stroke="#ddd" stroke-width="2" stroke-dasharray="12 8"/>` + text(1076, y - 1, n, 'fill="#ccc" font-size="28" text-anchor="end"');
  }
  s += text(5, 39, '127.03', 'fill="#888" font-size="37"') + text(4, 170, '−10.79', 'fill="#888" font-size="37"') + line(kk, '#262626') + line(dd, '#e8c15d') + line(jj, '#b943c4');
  document.getElementById('kdj').innerHTML = s;
}

drawKline();
drawVolume();
drawMacd();
drawKdj();
```
